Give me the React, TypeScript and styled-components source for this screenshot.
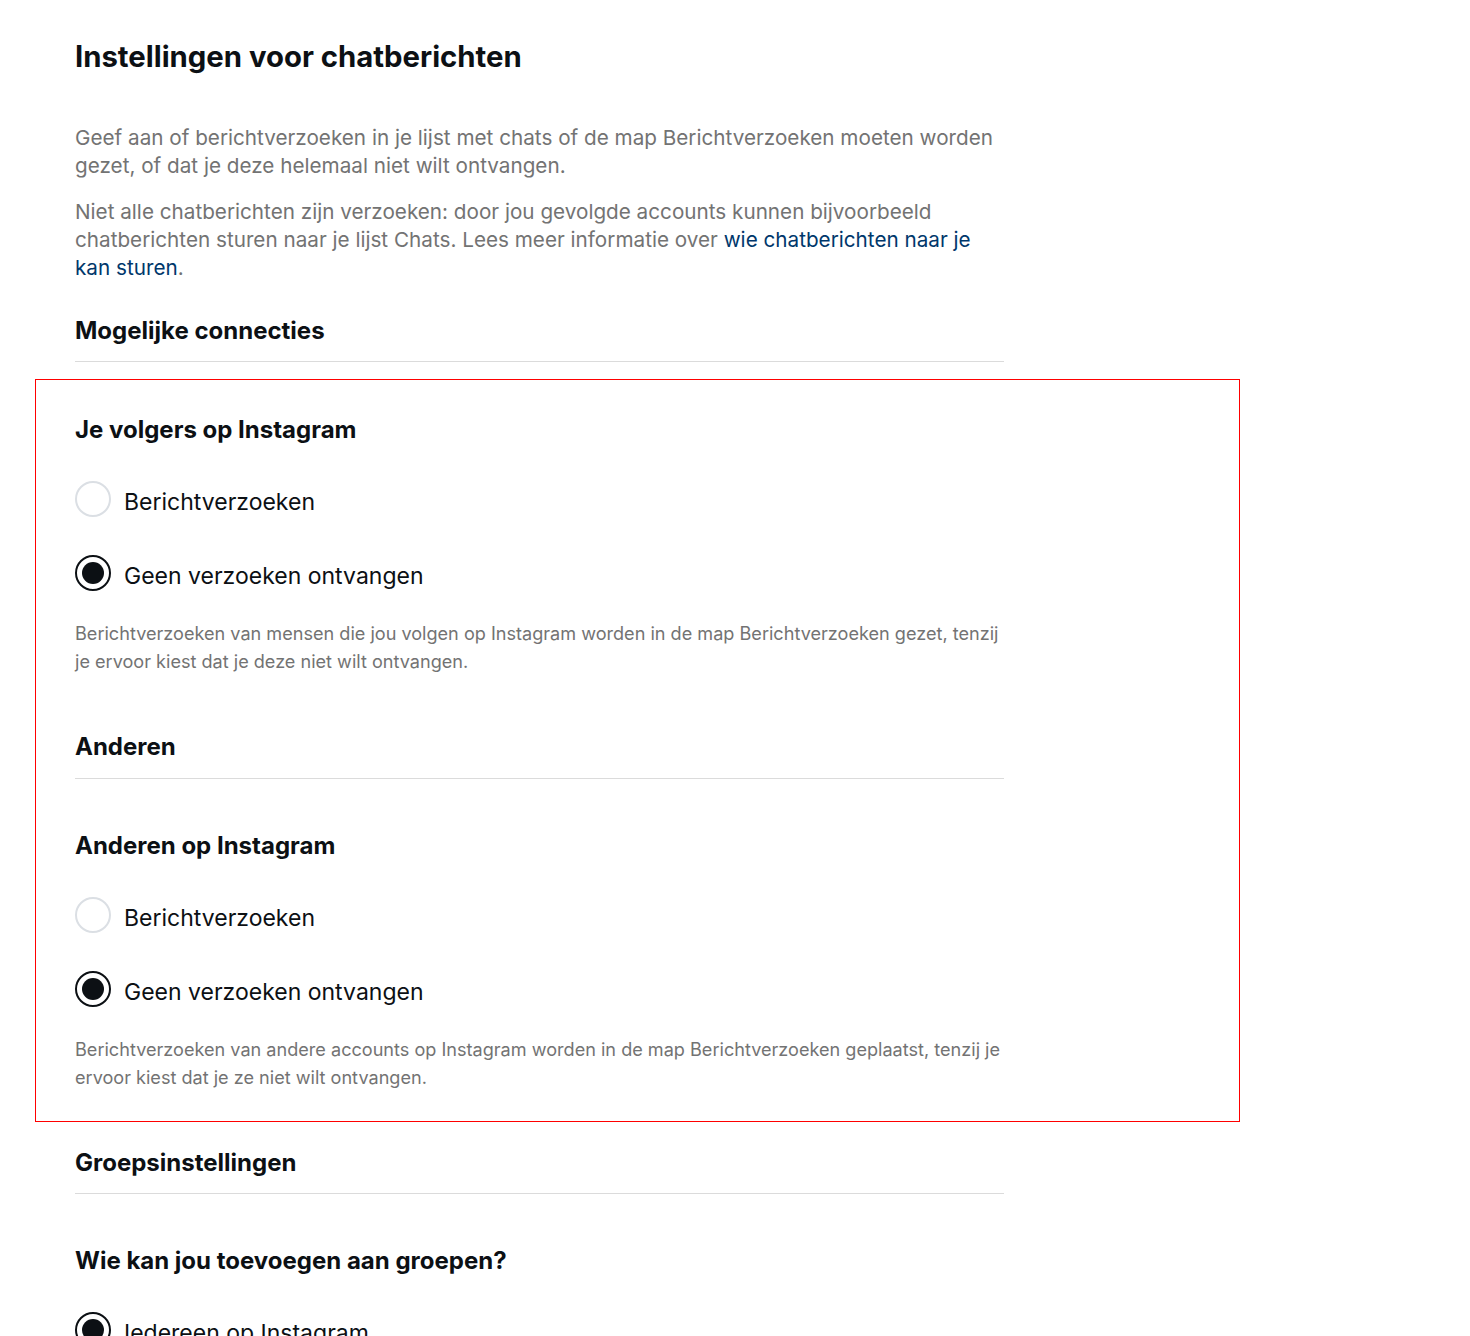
import React from "react";
import styled, { createGlobalStyle } from "styled-components";

const Global = createGlobalStyle`
  html, body { margin: 0; padding: 0; background: #ffffff; }
  body { font-family: Inter, "Open Sans", "Liberation Sans", sans-serif; color: #0c1014; }
  * { box-sizing: border-box; }
`;

const Page = styled.main`
  padding: 39px 0 0 75px;
  width: 1470px;
  height: 1336px;
  overflow: hidden;
`;

const Column = styled.div`
  width: 929px;
`;

const Title = styled.h1`
  margin: 0;
  font-size: 29.3px;
  line-height: 36px;
  font-weight: 700;
  color: #0c1014;
`;

const Intro = styled.div`
  margin-top: 49px;
  display: flex;
  flex-direction: column;
  gap: 18px;
`;

const IntroText = styled.p`
  margin: 0;
  font-size: 20.7px;
  line-height: 28px;
  color: #737373;
`;

const Link = styled.a`
  color: #00376b;
  text-decoration: none;
`;

const SectionHeader = styled.div<{ $gap: number }>`
  margin-top: ${(p) => p.$gap}px;
`;

const SectionTitle = styled.h2`
  margin: 0;
  font-size: 24px;
  line-height: 28px;
  font-weight: 700;
  color: #0c1014;
`;

const Divider = styled.hr<{ $space?: number }>`
  margin: ${(p) => p.$space ?? 16}px 0 0;
  border: 0;
  height: 1px;
  background: #dbdbdb;
`;

const Highlight = styled.section`
  margin: 17px 0 0 -40px;
  width: 1205px;
  border: 1px solid rgb(255, 0, 0);
  padding: 36px 0 30px 39px;
`;

const HighlightInner = styled.div`
  width: 929px;
`;

const Group = styled.div<{ $gap: number }>`
  margin-top: ${(p) => p.$gap}px;
`;

const GroupTitle = styled.h3`
  margin: 0;
  font-size: 24px;
  line-height: 28px;
  font-weight: 700;
  color: #0c1014;
`;

const Options = styled.div`
  margin-top: 18px;
  display: flex;
  flex-direction: column;
`;

const OptionRow = styled.label`
  display: flex;
  align-items: center;
  gap: 13px;
  height: 74px;
  cursor: pointer;
`;

const RadioCircle = styled.span<{ $checked: boolean }>`
  flex: none;
  width: 36px;
  height: 36px;
  border-radius: 50%;
  border: ${(p) => (p.$checked ? "2.5px solid #0c1014" : "2px solid #dbdfe4")};
  display: flex;
  align-items: center;
  justify-content: center;
  &::after {
    content: "";
    display: ${(p) => (p.$checked ? "block" : "none")};
    width: 22px;
    height: 22px;
    border-radius: 50%;
    background: #0c1014;
  }
`;

const OptionLabel = styled.span`
  font-size: 23px;
  line-height: 28px;
  padding-top: 5px;
  color: #0c1014;
`;

const Help = styled.p`
  margin: 10px 0 0;
  font-size: 18.1px;
  line-height: 27.5px;
  color: #737373;
`;

type Opt = { label: string; checked: boolean };

const RadioGroup: React.FC<{ title: string; options: Opt[]; help?: string; gap: number }> = ({
  title,
  options,
  help,
  gap,
}) => (
  <Group $gap={gap}>
    <GroupTitle>{title}</GroupTitle>
    <Options>
      {options.map((o) => (
        <OptionRow key={o.label}>
          <RadioCircle $checked={o.checked} />
          <OptionLabel>{o.label}</OptionLabel>
        </OptionRow>
      ))}
    </Options>
    {help && <Help>{help}</Help>}
  </Group>
);

const reqOptions: Opt[] = [
  { label: "Berichtverzoeken", checked: false },
  { label: "Geen verzoeken ontvangen", checked: true },
];

export default function App() {
  return (
    <>
      <Global />
      <Page>
        <Column>
          <Title>Instellingen voor chatberichten</Title>
          <Intro>
            <IntroText>
              Geef aan of berichtverzoeken in je lijst met chats of de map Berichtverzoeken moeten worden
              gezet, of dat je deze helemaal niet wilt ontvangen.
            </IntroText>
            <IntroText>
              Niet alle chatberichten zijn verzoeken: door jou gevolgde accounts kunnen bijvoorbeeld
              chatberichten sturen naar je lijst Chats. Lees meer informatie over{" "}
              <Link href="#">wie chatberichten naar je kan sturen</Link>.
            </IntroText>
          </Intro>
          <SectionHeader $gap={35}>
            <SectionTitle>Mogelijke connecties</SectionTitle>
            <Divider />
          </SectionHeader>
        </Column>
        <Highlight>
          <HighlightInner>
            <RadioGroup
              gap={0}
              title="Je volgers op Instagram"
              options={reqOptions}
              help="Berichtverzoeken van mensen die jou volgen op Instagram worden in de map Berichtverzoeken gezet, tenzij je ervoor kiest dat je deze niet wilt ontvangen."
            />
            <SectionHeader $gap={58}>
              <SectionTitle>Anderen</SectionTitle>
              <Divider $space={17} />
            </SectionHeader>
            <RadioGroup
              gap={53}
              title="Anderen op Instagram"
              options={reqOptions}
              help="Berichtverzoeken van andere accounts op Instagram worden in de map Berichtverzoeken geplaatst, tenzij je ervoor kiest dat je ze niet wilt ontvangen."
            />
          </HighlightInner>
        </Highlight>
        <Column>
          <SectionHeader $gap={27}>
            <SectionTitle>Groepsinstellingen</SectionTitle>
            <Divider $space={16} />
          </SectionHeader>
          <RadioGroup
            gap={53}
            title="Wie kan jou toevoegen aan groepen?"
            options={[
              { label: "Iedereen op Instagram", checked: true },
              { label: "Alleen mensen die je volgt op Instagram", checked: false },
            ]}
          />
        </Column>
      </Page>
    </>
  );
}
